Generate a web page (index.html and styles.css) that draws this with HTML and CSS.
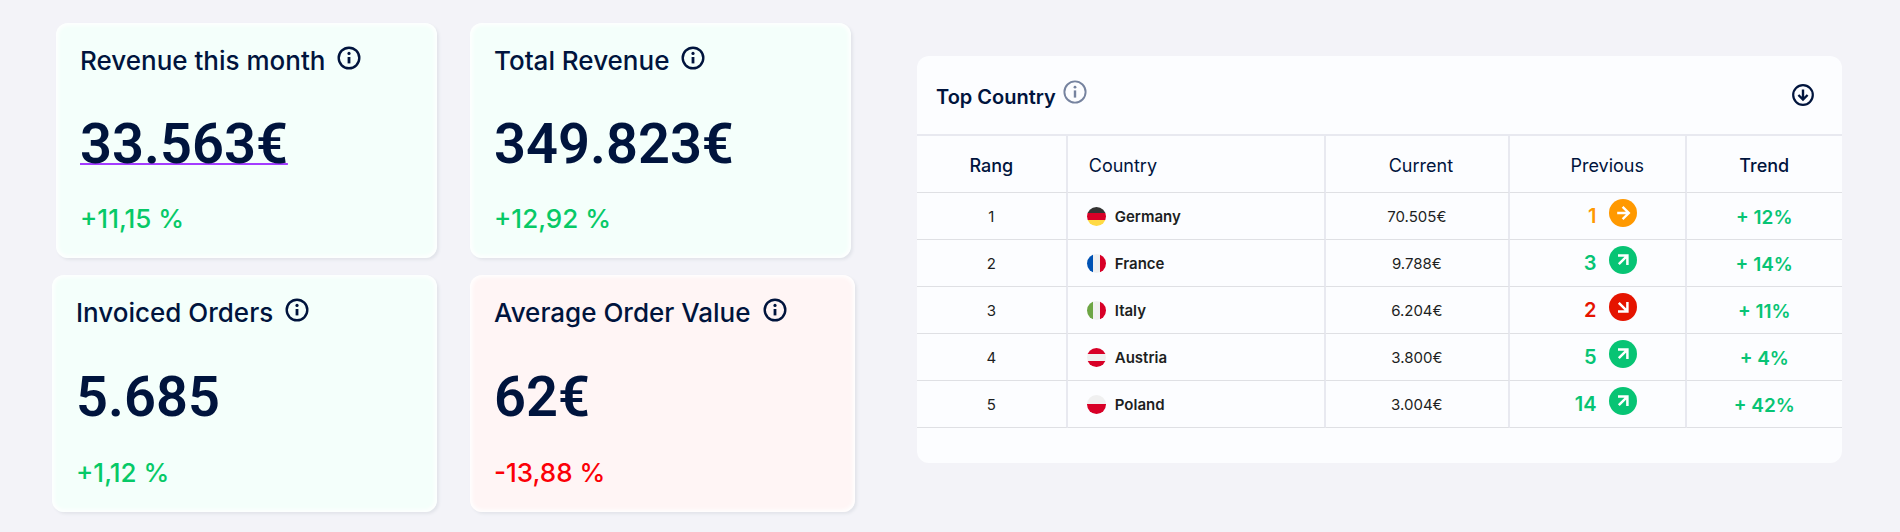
FILE: index.html
```html
<!DOCTYPE html>
<html lang="en">
<head>
  <meta charset="UTF-8">
  <title>Sales Dashboard</title>
  <meta name="viewport" content="width=device-width, initial-scale=1.0">
  <link rel="stylesheet" href="styles.css">
</head>
<body>

  <!-- Icons -->
  <svg class="sprite" aria-hidden="true">
    <symbol id="info" viewBox="0 0 24 24">
      <circle cx="12" cy="12" r="10.3" fill="none" stroke="currentColor" stroke-width="2.4"/>
      <circle cx="12" cy="7.4" r="1.6" fill="currentColor"/>
      <path d="M12 11v6.4" fill="none" stroke="currentColor" stroke-width="2.8"/>
    </symbol>
    <symbol id="info-thin" viewBox="0 0 24 24">
      <circle cx="12" cy="12" r="10.6" fill="none" stroke="currentColor" stroke-width="1.9"/>
      <circle cx="12" cy="7.2" r="1.4" fill="currentColor"/>
      <path d="M12 10.4v7.2" fill="none" stroke="currentColor" stroke-width="2.4"/>
    </symbol>
    <symbol id="download" viewBox="0 0 22 22">
      <circle cx="11" cy="11" r="9.8" fill="none" stroke="currentColor" stroke-width="2.2"/>
      <path d="M11 5.4v10.2M6.4 11l4.6 4.6 4.6-4.6" fill="none" stroke="currentColor" stroke-width="2.4"/>
    </symbol>
    <symbol id="same" viewBox="0 0 28 28">
      <circle cx="14" cy="14" r="14" fill="#ff9900"/>
      <path d="M8.2 14h11M13.6 7.8l6.2 6.2-6.2 6.2" fill="none" stroke="#fff" stroke-width="2.4"/>
    </symbol>
    <symbol id="up" viewBox="0 0 28 28">
      <circle cx="14" cy="14" r="14" fill="#07c474"/>
      <path d="M9 9.6h9.4V19M18.4 9.6l-8.6 8.6" fill="none" stroke="#fff" stroke-width="2.5"/>
    </symbol>
    <symbol id="down" viewBox="0 0 28 28">
      <circle cx="14" cy="14" r="14" fill="#e51400"/>
      <path d="M9 18.4h9.4V9M18.4 18.4L9.8 9.8" fill="none" stroke="#fff" stroke-width="2.5"/>
    </symbol>
  </svg>

  <main class="dashboard">
    <!-- KPI cards -->
    <section class="kpis">
      <div class="kpi-row first">
        <div class="card">
          <h2>Revenue this month <svg class="icon"><use href="#info"/></svg></h2>
          <p class="value"><a href="#">33.563€</a></p>
          <p class="change">+11,15 %</p>
        </div>
        <div class="card">
          <h2>Total Revenue <svg class="icon"><use href="#info"/></svg></h2>
          <p class="value">349.823€</p>
          <p class="change">+12,92 %</p>
        </div>
      </div>
      <div class="kpi-row second">
        <div class="card">
          <h2>Invoiced Orders <svg class="icon"><use href="#info"/></svg></h2>
          <p class="value">5.685</p>
          <p class="change">+1,12 %</p>
        </div>
        <div class="card negative">
          <h2>Average Order Value <svg class="icon"><use href="#info"/></svg></h2>
          <p class="value">62€</p>
          <p class="change">-13,88 %</p>
        </div>
      </div>
    </section>

    <!-- Top Country -->
    <section class="panel">
      <header class="panel-header">
        <h3>Top Country <svg class="icon"><use href="#info-thin"/></svg></h3>
        <button type="button" aria-label="Download"><svg class="download"><use href="#download"/></svg></button>
      </header>
      <table>
        <colgroup>
          <col class="col-rang">
          <col class="col-country">
          <col class="col-current">
          <col class="col-previous">
          <col class="col-trend">
        </colgroup>
        <thead>
          <tr>
            <th class="strong">Rang</th>
            <th class="country">Country</th>
            <th class="current">Current</th>
            <th class="previous">Previous</th>
            <th class="strong">Trend</th>
          </tr>
        </thead>
        <tbody>
          <tr>
            <td>1</td>
            <td><div class="name"><span class="flag de"></span>Germany</div></td>
            <td>70.505€</td>
            <td><div class="rank same">1 <svg class="arrow"><use href="#same"/></svg></div></td>
            <td class="trend">+ 12%</td>
          </tr>
          <tr>
            <td>2</td>
            <td><div class="name"><span class="flag fr"></span>France</div></td>
            <td>9.788€</td>
            <td><div class="rank up">3 <svg class="arrow"><use href="#up"/></svg></div></td>
            <td class="trend">+ 14%</td>
          </tr>
          <tr>
            <td>3</td>
            <td><div class="name"><span class="flag it"></span>Italy</div></td>
            <td>6.204€</td>
            <td><div class="rank down">2 <svg class="arrow"><use href="#down"/></svg></div></td>
            <td class="trend">+ 11%</td>
          </tr>
          <tr>
            <td>4</td>
            <td><div class="name"><span class="flag at"></span>Austria</div></td>
            <td>3.800€</td>
            <td><div class="rank up">5 <svg class="arrow"><use href="#up"/></svg></div></td>
            <td class="trend">+ 4%</td>
          </tr>
          <tr>
            <td>5</td>
            <td><div class="name"><span class="flag pl"></span>Poland</div></td>
            <td>3.004€</td>
            <td><div class="rank up">14 <svg class="arrow"><use href="#up"/></svg></div></td>
            <td class="trend">+ 42%</td>
          </tr>
        </tbody>
      </table>
    </section>
  </main>

</body>
</html>
```
FILE: styles.css
```css
* {
  box-sizing: border-box;
}
body {
  margin: 0;
  background-color: #f3f3f8;
  font-family: Inter, "Liberation Sans", sans-serif;
  color: #00143d;
}
h2, h3, p {
  margin: 0;
}
.sprite {
  display: none;
}
.dashboard {
  display: grid;
  grid-template-columns: 803fr 925fr;
  gap: 62px;
  align-items: start;
  padding: 23px 58px 20px 52px;
}

/* KPI cards */
.kpis {
  display: flex;
  flex-direction: column;
  gap: 17px;
}
.kpi-row {
  display: grid;
  grid-template-columns: 1fr 1fr;
  gap: 33px;
}
.kpi-row.first {
  min-height: 235px;
  padding: 0 4px;
}
.kpi-row.second {
  min-height: 237px;
}
.card {
  display: flex;
  flex-direction: column;
  justify-content: space-between;
  padding: 22px 24px 23px;
  background-color: #f4fffb;
  border-radius: 12px;
  box-shadow: inset 0 0 4px 2px #fff, 2px 2px 3px #e2e4ea;
}
.card h2 {
  display: flex;
  align-items: center;
  gap: 12px;
  font-size: 26px;
  font-weight: 500;
  line-height: 32px;
}
.icon {
  width: 24px;
  height: 24px;
  margin-bottom: 6px;
}
.value {
  margin-top: 7px;
  font-family: Roboto, sans-serif;
  font-size: 56px;
  font-weight: 600;
  line-height: 56px;
}
.value a {
  color: inherit;
  text-decoration: underline 2px #a33cff;
  text-underline-offset: 0;
  text-decoration-skip-ink: none;
}
.change {
  font-size: 26px;
  font-weight: 500;
  line-height: 32px;
  color: #07c967;
}
.card.negative {
  background-color: #fff5f5;
}
.negative .change {
  color: #fb0007;
}

/* Top Country */
.panel {
  margin-top: 33px;
  padding-bottom: 35px;
  background-color: #fcfdff;
  border-radius: 12px;
}
.panel-header {
  display: flex;
  justify-content: space-between;
  align-items: center;
  height: 78px;
  padding: 0 28px 0 19px;
}
.panel-header h3 {
  display: flex;
  align-items: center;
  gap: 7px;
  padding-top: 4px;
  font-size: 20px;
  font-weight: 600;
}
.panel-header .icon {
  margin-bottom: 10px;
  color: #76839f;
}
.panel-header button {
  display: flex;
  padding: 0;
  border: none;
  background: none;
  color: #00143d;
  cursor: pointer;
}
.download {
  width: 22px;
  height: 22px;
}
table {
  width: 100%;
  table-layout: fixed;
  border-collapse: separate;
  border-spacing: 0;
  border-top: 2px solid #e8e9f0;
}
.col-rang {
  width: 16.3%;
}
.col-country {
  width: 27.9%;
}
.col-current {
  width: 19.9%;
}
.col-previous {
  width: 19.1%;
}
.col-trend {
  width: 16.8%;
}
th, td {
  padding: 0;
  text-align: center;
  border-right: 2px solid #e8e9f0;
  border-bottom: 1px solid #dfe0e4;
}
th:last-child, td:last-child {
  border-right: none;
}
th {
  height: 57px;
  padding-top: 3px;
  font-size: 18px;
  font-weight: 400;
}
th.strong {
  font-weight: 500;
}
th.country {
  padding-left: 21px;
  text-align: left;
}
th.current {
  padding-left: 8px;
}
th.previous {
  padding-left: 20px;
}
td {
  height: 47px;
  font-size: 15px;
  color: #1d1f22;
}
.name {
  display: flex;
  align-items: center;
  gap: 9px;
  padding-left: 19px;
  font-weight: 600;
}
.flag {
  width: 19px;
  height: 19px;
  border-radius: 50%;
}
.flag.de {
  background: linear-gradient(#333 33%, #d80027 33% 67%, #ffda44 67%);
}
.flag.fr {
  background: linear-gradient(to right, #0052b4 33%, #f0f0f0 33% 67%, #d80027 67%);
}
.flag.it {
  background: linear-gradient(to right, #6da544 33%, #f0f0f0 33% 67%, #d80027 67%);
}
.flag.at {
  background: linear-gradient(#d80027 33%, #f0f0f0 33% 67%, #d80027 67%);
}
.flag.pl {
  background: linear-gradient(#f0f0f0 50%, #d80027 50%);
}
.rank {
  display: flex;
  justify-content: flex-end;
  align-items: center;
  gap: 12px;
  padding-right: 48px;
  font-size: 20px;
  font-weight: 600;
}
.arrow {
  width: 28px;
  height: 28px;
  margin-bottom: 7px;
}
.rank.same {
  color: #ff9900;
}
.rank.up {
  color: #07c474;
}
.rank.down {
  color: #e51400;
}
td.trend {
  padding-top: 3px;
  font-size: 19px;
  font-weight: 600;
  color: #07c474;
}
```
